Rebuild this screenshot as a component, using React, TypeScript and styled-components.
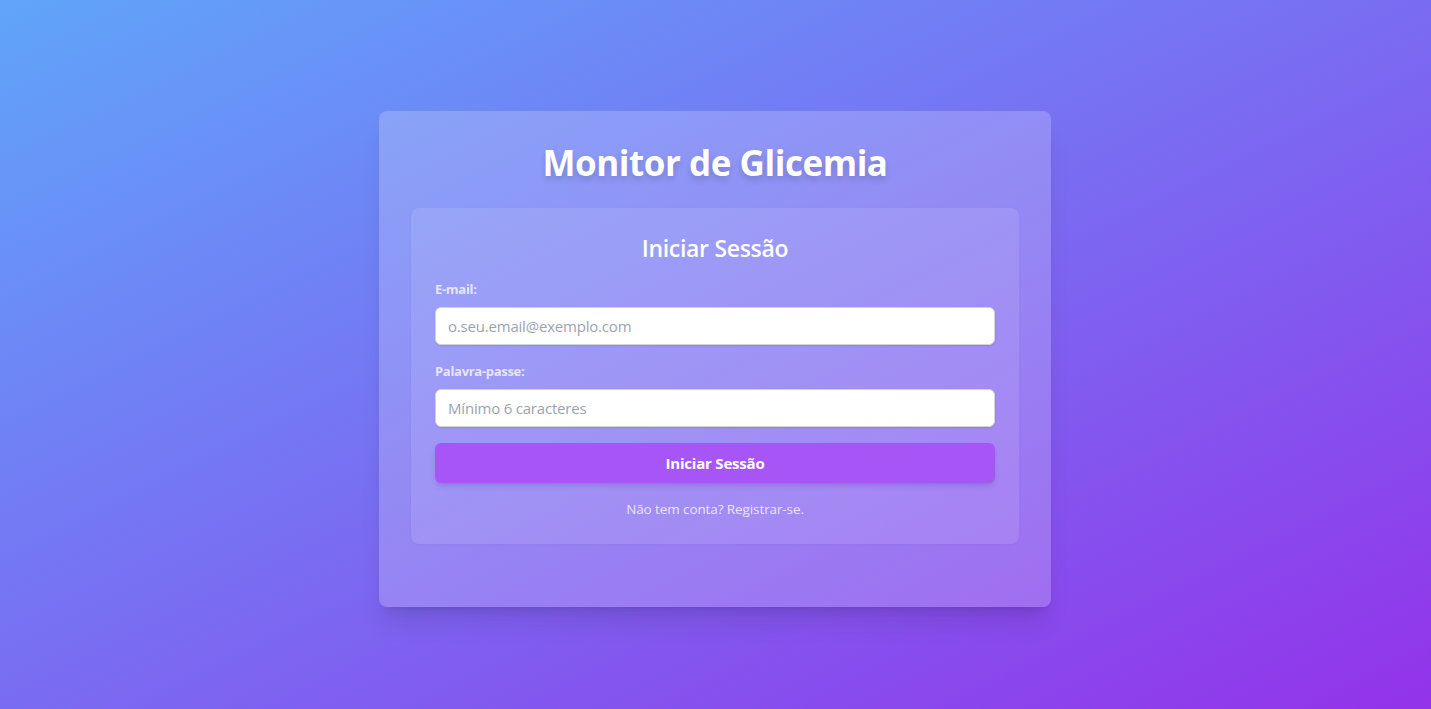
import styled, { createGlobalStyle } from "styled-components";

const GlobalStyle = createGlobalStyle`
    * {
        box-sizing: border-box;
    }

    body {
        margin: 0;
        font-family: "Open Sans", "Noto Sans", sans-serif;
    }
`;

const Page = styled.div`
    display: flex;
    justify-content: center;
    align-items: center;
    min-height: 100vh;
    padding: 9px 17px 0 16px;
    background: linear-gradient(to bottom right, #60a5fa, #9333ea);
`;

const Card = styled.div`
    width: 100%;
    max-width: 672px;
    padding: 32px 32px 63px;
    border-radius: 8px;
    background: rgba(255, 255, 255, 0.2);
    box-shadow: 0 20px 25px -5px rgba(0, 0, 0, 0.1), 0 8px 10px -6px rgba(0, 0, 0, 0.1);
`;

const Title = styled.h1`
    margin: 0 0 25px;
    font-size: 35px;
    line-height: 40px;
    font-weight: 700;
    letter-spacing: -0.45px;
    text-align: center;
    color: #ffffff;
    text-shadow: 0 4px 6px rgba(0, 0, 0, 0.15);
`;

const FormBox = styled.form`
    padding: 24px 24px 25px;
    border-radius: 8px;
    background: rgba(255, 255, 255, 0.1);
    box-shadow: 0 1px 3px rgba(0, 0, 0, 0.03);
`;

const FormTitle = styled.h2`
    margin: 0 0 15px;
    font-size: 23px;
    line-height: 32px;
    font-weight: 600;
    letter-spacing: -0.3px;
    text-align: center;
    color: #ffffff;
`;

const Field = styled.div`
    margin-bottom: 16px;
`;

const Label = styled.label`
    display: block;
    margin-bottom: 8px;
    font-size: 13px;
    line-height: 18px;
    padding-top: 1px;
    height: 20px;
    font-weight: 700;
    letter-spacing: -0.3px;
    color: rgba(244, 240, 255, 0.88);
`;

const Input = styled.input`
    display: block;
    width: 100%;
    height: 38px;
    padding: 0 12px;
    border: 1px solid #d1d5db;
    border-radius: 6px;
    background: #ffffff;
    font-family: inherit;
    font-size: 15px;
    letter-spacing: -0.2px;
    color: #111827;
    box-shadow: 0 1px 2px rgba(0, 0, 0, 0.1);
    outline: none;

    &::placeholder {
        color: #9ca3af;
    }
`;

const SubmitButton = styled.button`
    display: block;
    width: 100%;
    height: 40px;
    border: none;
    border-radius: 6px;
    background: #a855f7;
    font-family: inherit;
    font-size: 15px;
    font-weight: 700;
    letter-spacing: -0.2px;
    color: #ffffff;
    box-shadow: 0 4px 6px -1px rgba(0, 0, 0, 0.1), 0 2px 4px -2px rgba(0, 0, 0, 0.1);
    cursor: pointer;
`;

const SwitchText = styled.p`
    margin: 16px 0 0;
    font-size: 13.5px;
    line-height: 20px;
    letter-spacing: -0.1px;
    text-align: center;
    color: rgba(255, 255, 255, 0.8);
    cursor: pointer;
`;

const App = (): JSX.Element => {
    return (
        <>
            <GlobalStyle />
            <Page>
                <Card>
                    <Title>Monitor de Glicemia</Title>
                    <FormBox onSubmit={(e) => e.preventDefault()}>
                        <FormTitle>Iniciar Sessão</FormTitle>
                        <Field>
                            <Label htmlFor="email">E-mail:</Label>
                            <Input id="email" type="email" placeholder="o.seu.email@exemplo.com" />
                        </Field>
                        <Field>
                            <Label htmlFor="password">Palavra-passe:</Label>
                            <Input id="password" type="password" placeholder="Mínimo 6 caracteres" />
                        </Field>
                        <SubmitButton type="submit">Iniciar Sessão</SubmitButton>
                        <SwitchText>Não tem conta? Registrar-se.</SwitchText>
                    </FormBox>
                </Card>
            </Page>
        </>
    );
};

export default App;
